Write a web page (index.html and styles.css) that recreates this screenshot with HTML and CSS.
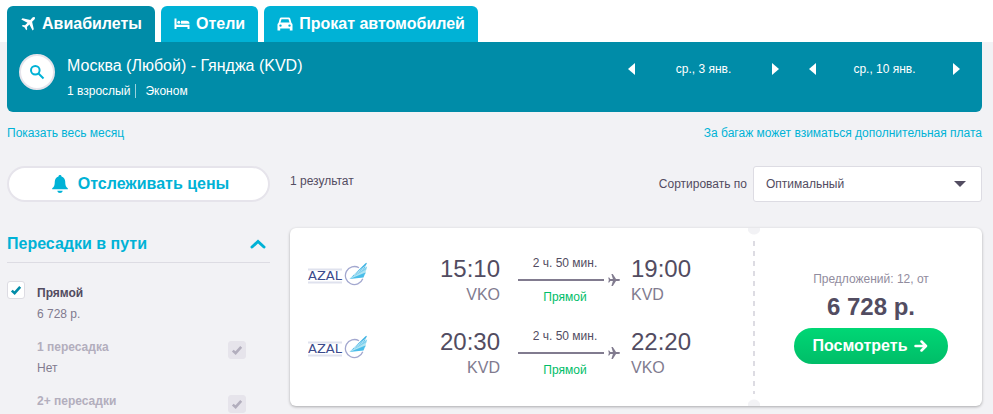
FILE: index.html
```html
<!DOCTYPE html>
<html lang="ru">
<head>
<meta charset="utf-8">
<title>Москва – Гянджа: авиабилеты</title>
<meta name="viewport" content="width=device-width, initial-scale=1">
<link rel="stylesheet" href="styles.css">
</head>
<body>
<svg class="defs" aria-hidden="true">
  <symbol id="tick" viewBox="0 0 12 12"><path d="M1.800 6.600 4.600 9.200 10.200 2.800" fill="none" stroke="currentColor" stroke-width="2.600"/></symbol>
  <symbol id="plane" viewBox="0 0 12 12"><path d="M12 6c0 .6-.6.9-1.400.9H8L4.800 12H3.400l1.500-5.100H2.300L1.200 8.400H.2L.9 6 .2 3.600h1L2.300 5.100h2.600L3.400 0h1.400L8 5.100h2.600C11.400 5.100 12 5.400 12 6z" fill="currentColor"/></symbol>
  <symbol id="wing" viewBox="0 0 60 24">
    <path d="M0 7.500h34M0 20.500h34" stroke="#dfe2ee" stroke-width="2"/>
    <path d="M51 5.800a9 9 0 1 0 3.800 11" fill="none" stroke="#a3a8cf" stroke-width="1.300"/>
    <path d="M41.500 17 57.500 1.300 59 .8 57 5.500z" fill="#3fb3e3"/>
    <path d="M41.500 17 59.200 4.300 58 8.500z" fill="#7ed0ee"/>
    <path d="M41.500 17 58 7.500 57.500 12z" fill="#b0e4f2"/>
    <path d="M41.500 17 57.500 10.500 55.500 15.500z" fill="#49bde9"/>
    <path d="M46 12.800 58.500 3.300" stroke="#fff" stroke-width=".6"/>
  </symbol>
</svg>

<header class="top">
  <nav class="tabs">
    <a class="tab tab-active" href="#"><svg class="tab-icon" viewBox="0 0 16 16"><path d="M14.700 1.300c.6.600.3 1.600-.3 2.200l-2.300 2.300 1.700 7.500-1.200 1.200-3.200-5.900-2.500 2.500.3 2.200-1 1-1.500-2.900L1.800 9.900l1-1 2.200.3 2.500-2.500L1.300 3.500l1.200-1.200 7.800 1.600 2.200-2.300c.6-.6 1.600-.9 2.200-.3z"/></svg>Авиабилеты</a>
    <a class="tab" href="#"><svg class="tab-icon" viewBox="0 0 16 16"><path d="M.5 2.500h2v6.200h13V13h-2v-2h-11v2h-2z"/><circle cx="4.800" cy="6.200" r="1.500"/><path d="M7 4.800h5.500c1.800 0 3 1 3 3H7z"/></svg>Отели</a>
    <a class="tab" href="#"><svg class="tab-icon" viewBox="0 0 16 16"><path fill-rule="evenodd" d="M4.200 1.500h7.600c.7 0 1.200.4 1.400 1L14.500 7c.7.4 1 .9 1 1.600v5.900h-2.700v-2H3.200v2H.5V8.600c0-.7.3-1.200 1-1.600l1.300-4.500c.2-.6.7-1 1.400-1zM4.500 3.200 3.500 6.500h9l-1-3.300zM3.500 8.400a1.200 1.200 0 1 0 0 2.400 1.200 1.200 0 0 0 0-2.400zm9 0a1.200 1.200 0 1 0 0 2.400 1.200 1.200 0 0 0 0-2.400z"/></svg>Прокат автомобилей</a>
  </nav>
</header>

<main class="page">
  <section class="search">
    <button class="search-btn" type="button" aria-label="Изменить поиск"><svg viewBox="0 0 16 16"><circle cx="6.300" cy="6.300" r="4.300"/><path d="M9.500 9.500 14.500 14.500"/></svg></button>
    <div class="route">
      <h1 class="route-title">Москва (Любой) - Гянджа (KVD)</h1>
      <p class="route-info"><span>1 взрослый</span><span class="cabin">Эконом</span></p>
    </div>
    <div class="dates">
      <div class="date">
        <button class="step" type="button" aria-label="Предыдущий день вылета"><svg viewBox="0 0 7 12"><path d="M7 0v12L0 6z"/></svg></button>
        <span>ср., 3 янв.</span>
        <button class="step" type="button" aria-label="Следующий день вылета"><svg viewBox="0 0 7 12"><path d="M0 0v12l7-6z"/></svg></button>
      </div>
      <div class="date">
        <button class="step" type="button" aria-label="Предыдущий день возвращения"><svg viewBox="0 0 7 12"><path d="M7 0v12L0 6z"/></svg></button>
        <span>ср., 10 янв.</span>
        <button class="step" type="button" aria-label="Следующий день возвращения"><svg viewBox="0 0 7 12"><path d="M0 0v12l7-6z"/></svg></button>
      </div>
    </div>
  </section>

  <div class="links">
    <a href="#">Показать весь месяц</a>
    <a href="#">За багаж может взиматься дополнительная плата</a>
  </div>

  <div class="columns">
    <aside class="side">
      <button class="alert" type="button"><svg class="bell" viewBox="0 0 16 18"><path d="M8 0c.9 0 1.500.6 1.500 1.400 2.400.7 3.700 2.700 3.700 5.200 0 4 .8 5.500 2.600 6.700v.9H.2v-.9C2 12.100 2.800 10.600 2.800 6.600c0-2.500 1.300-4.500 3.700-5.200C6.500.6 7.100 0 8 0zM5.300 15.700h5.400C10.400 17 9.400 18 8 18s-2.400-1-2.700-2.300z"/></svg>Отслеживать цены</button>
      <button class="filter-head" type="button" aria-expanded="true">Пересадки в пути<svg class="chevron" viewBox="0 0 16 10"><path d="M2 8 8 2.500 14 8"/></svg></button>
      <div class="option">
        <span class="check"><input type="checkbox" id="direct" checked><svg><use href="#tick"/></svg></span>
        <label for="direct"><b>Прямой</b><span>6 728 р.</span></label>
      </div>
      <div class="option option-off">
        <label for="one"><b>1 пересадка</b><span>Нет</span></label>
        <span class="check"><input type="checkbox" id="one" checked disabled><svg><use href="#tick"/></svg></span>
      </div>
      <div class="option option-off">
        <label for="two"><b>2+ пересадки</b></label>
        <span class="check"><input type="checkbox" id="two" checked disabled><svg><use href="#tick"/></svg></span>
      </div>
    </aside>

    <div class="results">
      <div class="toolbar">
        <span class="count">1 результат</span>
        <label for="sort">Сортировать по</label>
        <div class="sort">
          <select id="sort"><option>Оптимальный</option></select>
          <svg viewBox="0 0 12 6"><path d="M0 0h12L6 6z"/></svg>
        </div>
      </div>

      <article class="ticket">
        <div class="legs">
          <div class="leg">
            <svg class="logo" viewBox="0 0 60 24"><use href="#wing"/><text x="0" y="18">AZAL</text></svg>
            <div class="point depart"><time>15:10</time><span>VKO</span></div>
            <div class="flight"><span>2 ч. 50 мин.</span><div class="track"><i></i><svg><use href="#plane"/></svg></div><span class="direct">Прямой</span></div>
            <div class="point arrive"><time>19:00</time><span>KVD</span></div>
          </div>
          <div class="leg">
            <svg class="logo" viewBox="0 0 60 24"><use href="#wing"/><text x="0" y="18">AZAL</text></svg>
            <div class="point depart"><time>20:30</time><span>KVD</span></div>
            <div class="flight"><span>2 ч. 50 мин.</span><div class="track"><i></i><svg><use href="#plane"/></svg></div><span class="direct">Прямой</span></div>
            <div class="point arrive"><time>22:20</time><span>VKO</span></div>
          </div>
        </div>
        <div class="tear"></div>
        <div class="offer">
          <span class="offer-count">Предложений: 12, от</span>
          <strong class="price">6 728 р.</strong>
          <a class="view" href="#">Посмотреть<svg viewBox="0 0 14 12"><path d="M1.500 6h10M7.500 1.500 12 6l-4.500 4.500"/></svg></a>
        </div>
      </article>
    </div>
  </div>
</main>
</body>
</html>
```

FILE: styles.css
```css
* { box-sizing: border-box; }

body {
  margin: 0;
  background: #f2f2f5;
  color: #524c61;
  font: 12px/20px "Liberation Sans", Arial, sans-serif;
}

button, select { font: inherit; color: inherit; cursor: pointer; }
button { border: 0; padding: 0; background: none; }
a { color: #00b2d6; text-decoration: none; }
h1, p { margin: 0; }
svg { display: block; flex: none; }
.defs { position: absolute; width: 0; height: 0; }

/* Tabs */
.top { background: #fff; padding: 6px 11px 0 7px; }
.tabs { display: flex; gap: 6px; }
.tab {
  display: flex;
  align-items: center;
  gap: 6px;
  height: 36px;
  padding: 0 13px;
  border-radius: 6px 6px 0 0;
  background: #00b2d6;
  color: #fff;
  font-size: 16px;
  font-weight: bold;
}
.tab-active { background: #008ca8; }
.tab-icon { width: 16px; height: 16px; fill: #fff; }

.page { padding: 0 11px 0 7px; }

/* Search summary */
.search {
  display: flex;
  align-items: flex-start;
  gap: 12px;
  height: 70px;
  padding: 12px 22px 0 12px;
  border-radius: 0 0 6px 6px;
  background: #008ca8;
  color: #fff;
}
.search-btn {
  display: grid;
  place-items: center;
  width: 36px;
  height: 36px;
  border: 2px solid #e6e4eb;
  border-radius: 50%;
  background: #fff;
}
.search-btn svg { width: 16px; height: 16px; fill: none; stroke: #00b2d6; stroke-width: 2; }
.route { flex: 1; }
.route-title { font-size: 16px; font-weight: normal; line-height: 24px; }
.route-info { display: flex; align-items: center; padding-top: 3px; }
.cabin { line-height: 14px; margin-left: 5px; padding-left: 9px; border-left: 1px solid #99d1dc; }
.dates { display: flex; gap: 30px; padding-top: 5px; }
.date { display: flex; justify-content: space-between; align-items: center; width: 151px; }
.step svg { width: 7px; height: 12px; fill: #fff; }

.links { display: flex; justify-content: space-between; padding: 11px 0 23px; }

.columns { display: flex; gap: 20px; }
.side { width: 263px; flex: none; }
.results { flex: 1; min-width: 0; }

/* Filters */
.alert {
  display: flex;
  align-items: center;
  justify-content: center;
  gap: 10px;
  width: 100%;
  height: 36px;
  padding-left: 4px;
  border: 2px solid #e6e4eb;
  border-radius: 18px;
  background: #fff;
  color: #00b2d6;
  font-size: 16px;
  font-weight: bold;
}
.bell { width: 16px; height: 18px; fill: #00b2d6; }
.filter-head {
  display: flex;
  align-items: center;
  justify-content: space-between;
  width: 100%;
  margin: 26px 0 18px;
  padding: 6px 4px 8px 0;
  border-bottom: 1px solid #dddce3;
  color: #00b2d6;
  font-size: 16px;
  font-weight: bold;
}
.chevron { width: 16px; height: 10px; fill: none; stroke: #00b2d6; stroke-width: 3; stroke-linecap: round; }
.option { display: flex; gap: 12px; min-height: 54px; }
.option:last-child { min-height: 0; }
.option label { flex: 1; padding-top: 2px; line-height: 21px; }
.option b, .option label span { display: block; }
.option label span { color: #817b8f; }
.check { display: grid; width: 18px; height: 18px; }
.check input, .check svg { grid-area: 1 / 1; }
.check input {
  appearance: none;
  width: 18px;
  height: 18px;
  margin: 0;
  border: 1px solid #dddce3;
  border-radius: 3px;
  background: #fff;
}
.check svg { place-self: center; width: 12px; height: 12px; color: #008ca8; pointer-events: none; }
.option-off { padding: 6px 24px 0 30px; }
.option-off label { padding-top: 0; margin-top: -4px; }
.option-off b { color: #b2aebd; }
.option-off .check input { border-color: #e6e4eb; background: #e6e4eb; }
.option-off .check svg { color: #b2aebd; }

/* Results */
.toolbar { display: flex; align-items: center; height: 36px; }
.count { flex: 1; padding-bottom: 6px; }
.sort { position: relative; width: 229px; margin-left: 6px; }
.sort select {
  appearance: none;
  width: 100%;
  height: 36px;
  padding: 0 12px;
  border: 1px solid #dddce3;
  border-radius: 3px;
  background: #fff;
}
.sort svg { position: absolute; right: 16px; top: 15px; width: 12px; height: 6px; fill: #524c61; pointer-events: none; }

.ticket {
  display: flex;
  margin-top: 26px;
  border-radius: 6px;
  background: #fff;
  box-shadow: 0 1px 3px rgba(0, 0, 0, .3);
}
.legs { flex: 1; padding: 26px 18px 23px; }
.leg { display: flex; align-items: flex-start; height: 56px; }
.leg + .leg { margin-top: 17px; }
.logo { width: 60px; height: 24px; margin-top: 8px; }
.logo text { font-family: "DejaVu Sans", sans-serif; font-size: 13px; fill: #3b4a8c; }
.point { display: flex; flex-direction: column; color: #817b8f; font-size: 16px; line-height: 22px; }
.point time { color: #524c61; font-size: 24px; line-height: 30px; }
.depart { flex: 1; align-items: flex-end; }
.arrive { width: 99px; }
.flight { width: 103px; margin: 0 10px 0 18px; line-height: 18px; }
.flight span { display: block; width: 94px; text-align: center; }
.flight .direct { color: #00bd68; }
.track { display: flex; align-items: center; gap: 4px; height: 16px; color: #817b8f; }
.track i { width: 86px; height: 2px; background: #817b8f; }
.track svg { width: 12px; height: 12px; }

.tear {
  width: 12px;
  background:
    radial-gradient(circle at 50% 0, #f2f2f5 6px, transparent 7px) top / 12px 8px no-repeat,
    radial-gradient(circle at 50% 100%, #f2f2f5 6px, transparent 7px) bottom / 12px 8px no-repeat,
    linear-gradient(#fff, #fff) top / 2px 13px no-repeat,
    linear-gradient(#fff, #fff) bottom / 2px 12px no-repeat,
    repeating-linear-gradient(#fff 0 3px, #dddce3 3px 8px, #fff 8px 10px) center / 2px 100% no-repeat;
}
.offer {
  display: flex;
  flex-direction: column;
  align-items: center;
  justify-content: center;
  width: 222px;
  padding-bottom: 1px;
}
.offer-count { color: #918c9e; }
.price { font-size: 24px; line-height: 32px; margin: 2px 0 5px; }
.view {
  display: flex;
  align-items: center;
  gap: 7px;
  height: 36px;
  padding: 0 20px 0 19px;
  border-radius: 18px;
  background: linear-gradient(#00d775, #00bd68);
  color: #fff;
  font-size: 16px;
  font-weight: bold;
}
.view svg { width: 14px; height: 12px; fill: none; stroke: #fff; stroke-width: 2.5; stroke-linecap: round; stroke-linejoin: round; }
```
